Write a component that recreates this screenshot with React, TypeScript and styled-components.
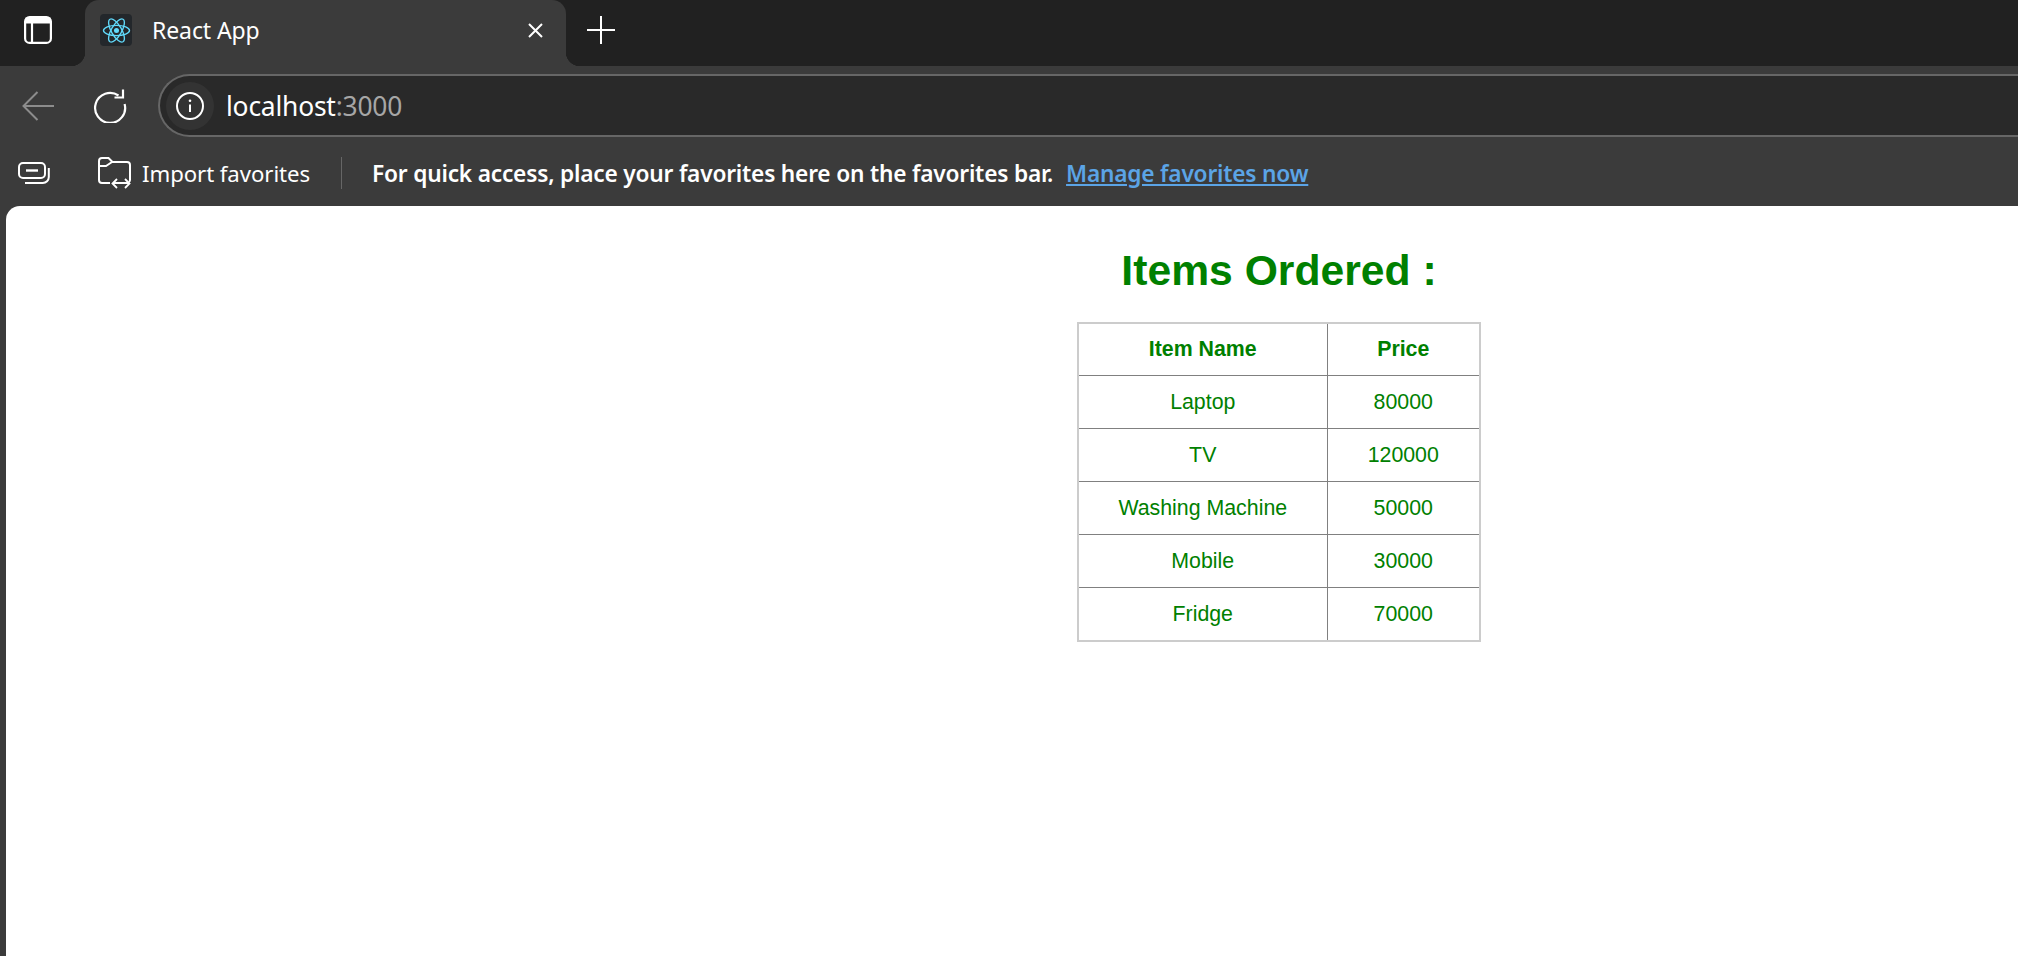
import React from "react";
import styled, { createGlobalStyle } from "styled-components";

const Global = createGlobalStyle`
  html, body { margin: 0; padding: 0; height: 100%; overflow: hidden; background: #3b3b3b; }
  #root { height: 100%; }
`;

const Shell = styled.div`
  width: 2018px;
  height: 956px;
  display: flex;
  flex-direction: column;
  background: #3b3b3b;
  font-family: "Noto Sans", "Open Sans", sans-serif;
  color: #fff;
  overflow: hidden;
`;

const TabStrip = styled.div`
  height: 66px;
  background: #212121;
  display: flex;
  align-items: stretch;
  flex: none;
`;

const StripButton = styled.div`
  width: 85px;
  flex: none;
  display: flex;
  align-items: center;
  padding: 0 0 6px 24px;
  box-sizing: border-box;
`;

const Tab = styled.div`
  position: relative;
  width: 481px;
  flex: none;
  background: #3b3b3b;
  border-radius: 14px 14px 0 0;
  display: flex;
  align-items: center;
  padding: 0 23px 6px 15px;
  box-sizing: border-box;
  &::before, &::after {
    content: "";
    position: absolute;
    bottom: 0;
    width: 14px;
    height: 14px;
  }
  &::before {
    left: -14px;
    background: radial-gradient(circle at 0 0, transparent 14px, #3b3b3b 14.5px);
  }
  &::after {
    right: -14px;
    background: radial-gradient(circle at 100% 0, transparent 14px, #3b3b3b 14.5px);
  }
`;

const Favicon = styled.div`
  width: 32px;
  height: 32px;
  border-radius: 4px;
  background: #23272b;
  display: flex;
  align-items: center;
  justify-content: center;
  flex: none;
`;

const TabTitle = styled.span`
  margin-left: 20px;
  flex: 1;
  font-size: 23px;
  letter-spacing: -0.1px;
  line-height: 28px;
`;

const NewTab = styled.div`
  margin-left: 21px;
  display: flex;
  align-items: center;
  padding-bottom: 6px;
`;

const Toolbar = styled.div`
  height: 71px;
  flex: none;
  display: flex;
  align-items: flex-start;
  padding-top: 8px;
  box-sizing: border-box;
`;

const NavButton = styled.div<{ $w: number; $gap?: number }>`
  width: ${(p) => p.$w}px;
  margin-right: ${(p) => p.$gap ?? 0}px;
  height: 63px;
  flex: none;
  display: flex;
  align-items: center;
  justify-content: center;
`;

const AddressBar = styled.div`
  flex: 1;
  height: 63px;
  margin-right: -40px;
  background: #292929;
  border: 2px solid #666;
  border-right: none;
  border-radius: 32px 0 0 32px;
  box-sizing: border-box;
  display: flex;
  align-items: center;
  padding-left: 6px;
`;

const SiteInfo = styled.div`
  width: 48px;
  height: 48px;
  border-radius: 50%;
  background: #333;
  display: flex;
  align-items: center;
  justify-content: center;
  flex: none;
`;

const Url = styled.div`
  margin-left: 12px;
  font-size: 26.4px;
  letter-spacing: -0.2px;
  line-height: 32px;
`;

const UrlPort = styled.span`
  color: #a6a6a6;
`;

const FavoritesBar = styled.div`
  height: 69px;
  flex: none;
  display: flex;
  align-items: center;
  padding: 3px 0 0 18px;
  box-sizing: border-box;
  font-size: 22.2px;
`;

const CollectionsButton = styled.div`
  width: 80px;
  flex: none;
  display: flex;
  align-items: center;
`;

const ImportLabel = styled.span`
  margin-left: 11px;
  letter-spacing: -0.07px;
`;

const Separator = styled.div`
  width: 1px;
  height: 32px;
  margin: 0 30px 0 31px;
  background: #666;
`;

const Hint = styled.span`
  font-size: 22.7px;
  font-weight: 600;
  letter-spacing: -0.2px;
`;

const ManageLink = styled.a`
  margin-left: 13px;
  font-size: 22.7px;
  color: #5ba4e6;
  font-weight: 600;
  letter-spacing: -0.2px;
  text-decoration: underline;
`;

const Page = styled.main`
  flex: 1;
  margin-left: 6px;
  background: #fff;
  border-top-left-radius: 14px;
  padding: 39px 0 0 534px;
  display: flex;
  flex-direction: column;
  align-items: center;
  font-family: "Liberation Sans", Arial, sans-serif;
  color: green;
`;

const Heading = styled.h1`
  margin: 0 0 27px;
  font-size: 42.67px;
  line-height: 50px;
  font-weight: 700;
`;

const OrderTable = styled.table`
  border-collapse: collapse;
  border: 2px solid #ccc;
  table-layout: fixed;
  width: 402px;
  font-size: 21.33px;
`;

const HeadCell = styled.th`
  border: 1px solid #808080;
  padding: 0;
  height: 51px;
  font-weight: 700;
  text-align: center;
`;

const Cell = styled.td`
  border: 1px solid #808080;
  padding: 0;
  height: 52px;
  text-align: center;
`;

const NameCol = styled.col`
  width: 249px;
`;

const PriceCol = styled.col`
  width: 153px;
`;

const items = [
  ["Laptop", "80000"],
  ["TV", "120000"],
  ["Washing Machine", "50000"],
  ["Mobile", "30000"],
  ["Fridge", "70000"],
];

const SidebarIcon = () => (
  <svg width="28" height="28" viewBox="0 0 28 28" fill="none" stroke="#fff" strokeWidth="2.2">
    <rect x="1.1" y="1.1" width="25.8" height="25.8" rx="4.5" />
    <path d="M1.5 1.5h25V7.5H1.5z" fill="#fff" stroke="none" />
    <path d="M8 7v19.5" />
  </svg>
);

const ReactIcon = () => (
  <svg width="29" height="27" viewBox="-15 -14 30 28" fill="none" stroke="#61dafb" strokeWidth="1.4">
    <circle r="2.6" fill="#61dafb" stroke="none" />
    <ellipse rx="13.5" ry="5.3" />
    <ellipse rx="13.5" ry="5.3" transform="rotate(60)" />
    <ellipse rx="13.5" ry="5.3" transform="rotate(120)" />
  </svg>
);

const CloseIcon = () => (
  <svg width="15" height="15" viewBox="0 0 15 15" stroke="#fff" strokeWidth="2" fill="none">
    <path d="M1 1l13 13M14 1L1 14" />
  </svg>
);

const PlusIcon = () => (
  <svg width="28" height="28" viewBox="0 0 28 28" stroke="#fff" strokeWidth="2" fill="none">
    <path d="M14 0v28M0 14h28" />
  </svg>
);

const BackIcon = () => (
  <svg width="32" height="30" viewBox="0 0 32 30" stroke="#8c8c8c" strokeWidth="2" fill="none">
    <path d="M32 15H2M15.5 1L1.5 15l14 14" />
  </svg>
);

const ReloadIcon = () => (
  <svg width="34" height="34" viewBox="0 0 34 34" stroke="#fff" strokeWidth="2.2" fill="none">
    <path d="M25.5 6.5A15 15 0 1 0 31.6 15" />
    <path d="M30 0.5V8.5H21.5" />
  </svg>
);

const InfoIcon = () => (
  <svg width="28" height="28" viewBox="0 0 28 28" stroke="#fff" strokeWidth="2" fill="none">
    <circle cx="14" cy="14" r="13" />
    <path d="M14 12.5v7.5" />
    <circle cx="14" cy="8.8" r="1.3" fill="#fff" stroke="none" />
  </svg>
);

const CollectionsIcon = () => (
  <svg width="32" height="22" viewBox="0 0 32 22" stroke="#fff" strokeWidth="2" fill="none">
    <rect x="1" y="1" width="26" height="15" rx="4" />
    <path d="M8 8.5h12" strokeWidth="2.4" />
    <path d="M30.8 6v9a6 6 0 0 1-6 6H7" />
  </svg>
);

const FolderIcon = () => (
  <svg width="33" height="32" viewBox="0 0 33 32" stroke="#fff" strokeWidth="2" fill="none">
    <path d="M12 26H4a3 3 0 0 1-3-3V4a3 3 0 0 1 3-3h6.5l4 4H29a3 3 0 0 1 3 3v15a3 3 0 0 1-1 2" />
    <path d="M1 9h7l6-4" />
    <path d="M15 26h16M19 22l-4.5 4.5L19 31M27 22l4.5 4.5L27 31" strokeWidth="1.8" />
  </svg>
);

export default function App() {
  return (
    <Shell>
      <Global />
      <TabStrip>
        <StripButton>
          <SidebarIcon />
        </StripButton>
        <Tab>
          <Favicon>
            <ReactIcon />
          </Favicon>
          <TabTitle>React App</TabTitle>
          <CloseIcon />
        </Tab>
        <NewTab>
          <PlusIcon />
        </NewTab>
      </TabStrip>
      <Toolbar>
        <NavButton $w={76}>
          <BackIcon />
        </NavButton>
        <NavButton $w={68} $gap={14}>
          <ReloadIcon />
        </NavButton>
        <AddressBar>
          <SiteInfo>
            <InfoIcon />
          </SiteInfo>
          <Url>
            localhost<UrlPort>:3000</UrlPort>
          </Url>
        </AddressBar>
      </Toolbar>
      <FavoritesBar>
        <CollectionsButton>
          <CollectionsIcon />
        </CollectionsButton>
        <FolderIcon />
        <ImportLabel>Import favorites</ImportLabel>
        <Separator />
        <Hint>For quick access, place your favorites here on the favorites bar.</Hint>
        <ManageLink>Manage favorites now</ManageLink>
      </FavoritesBar>
      <Page>
        <Heading>Items Ordered :</Heading>
        <OrderTable>
          <colgroup>
            <NameCol />
            <PriceCol />
          </colgroup>
          <thead>
            <tr>
              <HeadCell>Item Name</HeadCell>
              <HeadCell>Price</HeadCell>
            </tr>
          </thead>
          <tbody>
            {items.map(([name, price]) => (
              <tr key={name}>
                <Cell>{name}</Cell>
                <Cell>{price}</Cell>
              </tr>
            ))}
          </tbody>
        </OrderTable>
      </Page>
    </Shell>
  );
}
